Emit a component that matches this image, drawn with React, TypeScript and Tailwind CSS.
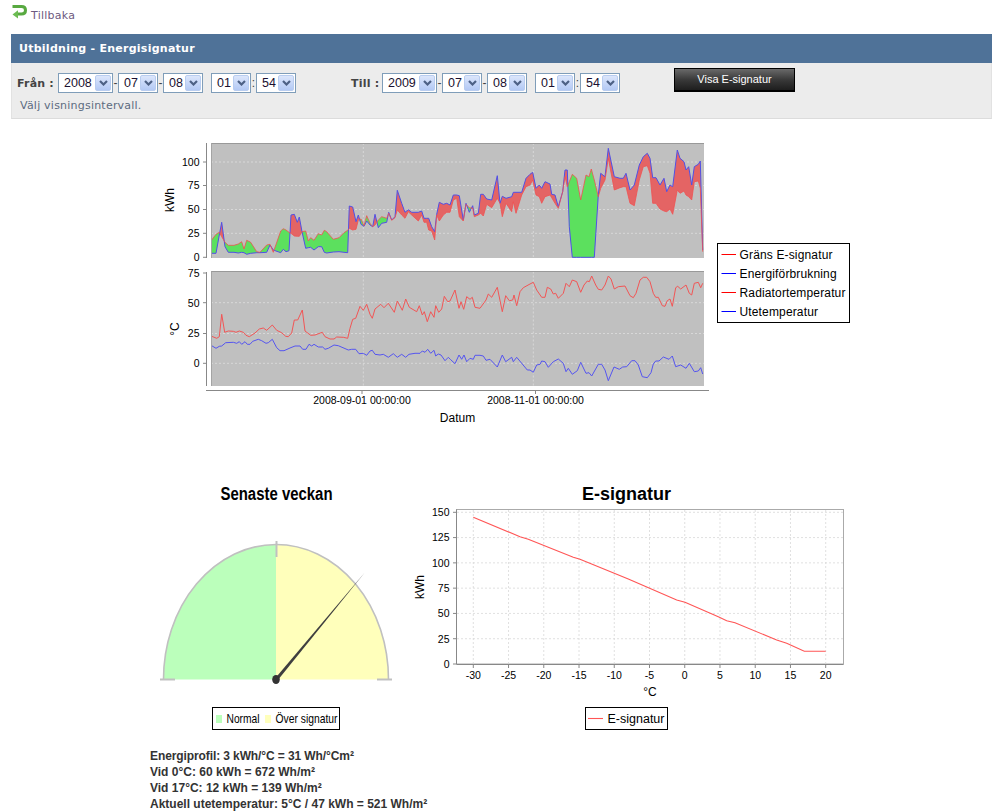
import * as React from 'react';

type Row = [number, number, number];
type Pt = [number, number];

// coordinates read off the reference, scaled 3x: x, blue y, red y
const kwhLeft: Row[] = [
  [155, 355, 315], [168, 355, 298], [178, 300, 292], [185, 262, 305], [195, 335, 322], [205, 352, 331], [222, 352, 331],
  [235, 354, 327], [245, 352, 320], [252, 353, 342], [260, 358, 316], [272, 355, 322], [290, 353, 350], [300, 353, 352],
  [320, 352, 330], [330, 330, 328], [340, 345, 352], [362, 353, 288], [370, 343, 281], [378, 350, 285], [387, 347, 292],
  [393, 240, 295], [403, 238, 303], [412, 262, 304], [418, 246, 304], [426, 290, 290], [437, 340, 288], [445, 338, 318],
  [452, 337, 308], [462, 345, 316], [475, 335, 296], [485, 335, 300], [493, 352, 286], [500, 354, 290], [520, 351, 313],
  [537, 350, 308], [552, 352, 293], [563, 353, 286], [568, 213, 280], [578, 216, 285], [588, 260, 283], [595, 240, 255],
  [603, 268, 252], [612, 274, 272], [620, 258, 242], [630, 270, 265], [638, 275, 275], [645, 238, 270], [655, 278, 255],
  [665, 265, 245], [680, 262, 250], [686, 232, 235], [695, 255, 256], [705, 245, 248], [712, 166, 225], [725, 205, 240],
  [735, 232, 250], [745, 224, 230], [755, 232, 240], [775, 232, 258], [785, 228, 240], [792, 250, 262], [800, 250, 262],
  [806, 250, 285], [815, 275, 288], [824, 290, 315], [830, 238, 240], [838, 202, 258], [850, 208, 240], [860, 205, 232],
  [870, 210, 232], [880, 180, 195],
];

const kwhRight: Row[] = [
  [20, 180, 190], [28, 182, 245], [40, 255, 258], [48, 205, 208], [58, 232, 218], [68, 212, 220], [73, 240, 245],
  [85, 235, 240], [92, 178, 235], [100, 178, 243], [110, 192, 208], [125, 195, 218], [142, 122, 190], [150, 205, 205],
  [157, 184, 245], [168, 190, 205], [185, 185, 230], [190, 172, 200], [198, 172, 235], [215, 172, 180], [228, 130, 155],
  [240, 118, 150], [248, 112, 135], [258, 160, 180], [268, 150, 185], [275, 160, 205], [285, 140, 185], [300, 147, 180],
  [305, 178, 188], [315, 180, 205], [325, 215, 220], [338, 170, 170], [345, 105, 125], [352, 105, 155], [358, 275, 140],
  [367, 367, 118], [380, 367, 130], [392, 367, 195], [408, 367, 120], [417, 367, 125], [424, 367, 102], [433, 367, 135],
  [445, 180, 185], [452, 115, 160], [465, 125, 135], [475, 40, 70], [493, 125, 165], [510, 130, 158], [520, 130, 155],
  [528, 115, 155], [540, 165, 205], [553, 150, 212], [568, 90, 135], [580, 65, 95], [592, 55, 92], [600, 70, 115],
  [608, 128, 205], [618, 128, 205], [630, 150, 222], [642, 130, 228], [650, 170, 230], [660, 150, 222], [668, 155, 238],
  [682, 45, 165], [690, 70, 175], [702, 80, 168], [708, 105, 180], [716, 95, 185], [725, 150, 195], [733, 95, 140],
  [745, 88, 138], [751, 78, 160], [758, 345, 350],
];

const kwhRows: Row[] = [
  ...kwhLeft.map(([x, b, r]): Row => [160 + x / 3, 135 + b / 3, 135 + r / 3]),
  ...kwhRight.map(([x, b, r]): Row => [450 + x / 3, 135 + b / 3, 135 + r / 3]),
];

const radLeft: Pt[] = [
  [155, 214], [170, 220], [178, 215], [185, 148], [194, 202], [205, 198], [220, 199], [228, 202], [238, 198], [250, 202],
  [258, 211], [268, 215], [285, 204], [298, 192], [310, 189], [320, 196], [337, 180], [350, 196], [365, 203], [377, 214],
  [385, 215], [395, 204], [403, 165], [413, 165], [427, 135], [435, 198], [452, 211], [465, 210], [487, 202], [495, 215],
  [510, 222], [522, 222], [530, 216], [550, 217], [563, 220], [570, 190], [578, 163], [587, 160], [600, 124], [610, 136],
  [620, 118], [630, 148], [637, 160], [645, 132], [662, 118], [672, 128], [685, 115], [703, 142], [712, 108], [727, 136],
  [737, 102], [748, 127], [770, 140], [778, 122], [787, 150], [793, 140], [802, 170], [812, 140], [822, 157], [827, 122],
  [836, 142], [845, 132], [853, 94], [863, 110], [870, 108],
];

const radRight: Pt[] = [
  [15, 75], [27, 130], [33, 110], [41, 133], [50, 95], [60, 103], [67, 97], [75, 127], [90, 130], [108, 105], [115, 87],
  [125, 97], [142, 67], [157, 140], [167, 92], [178, 107], [188, 105], [192, 90], [200, 122], [210, 80], [220, 68],
  [240, 57], [250, 52], [260, 75], [275, 97], [285, 97], [292, 67], [302, 72], [310, 87], [317, 85], [325, 100], [340, 85],
  [348, 55], [358, 65], [367, 45], [380, 50], [392, 82], [402, 60], [412, 48], [418, 50], [425, 33], [437, 60], [445, 73],
  [455, 75], [465, 60], [475, 33], [483, 42], [493, 72], [505, 65], [525, 63], [540, 92], [550, 98], [558, 85], [570, 45],
  [580, 37], [590, 37], [600, 50], [610, 85], [617, 97], [625, 97], [637, 122], [645, 124], [652, 107], [660, 102],
  [667, 124], [677, 68], [683, 64], [692, 72], [708, 60], [718, 85], [725, 90], [733, 55], [745, 52], [752, 68], [758, 55],
];

const uteLeft: Pt[] = [
  [155, 242], [168, 250], [178, 244], [185, 243], [197, 233], [220, 232], [230, 235], [238, 230], [245, 238], [255, 230],
  [262, 238], [270, 238], [278, 229], [295, 223], [305, 227], [318, 235], [325, 233], [337, 223], [350, 248], [360, 257],
  [372, 257], [390, 249], [405, 243], [420, 243], [428, 253], [438, 253], [447, 238], [455, 243], [462, 238], [475, 246],
  [488, 246], [495, 253], [505, 250], [522, 240], [535, 242], [565, 255], [575, 253], [587, 253], [597, 266], [610, 265],
  [620, 271], [630, 258], [637, 256], [645, 268], [660, 270], [670, 268], [685, 277], [700, 266], [712, 277], [725, 268],
  [737, 277], [747, 268], [765, 265], [780, 265], [787, 258], [795, 262], [803, 253], [812, 265], [822, 256], [827, 273],
  [835, 267], [843, 270], [855, 287], [865, 277], [872, 284],
];

const uteRight: Pt[] = [
  [15, 296], [27, 270], [35, 283], [42, 270], [50, 290], [60, 280], [70, 283], [75, 271], [90, 271], [100, 273], [108, 286],
  [120, 283], [142, 306], [157, 270], [167, 290], [185, 277], [190, 290], [200, 277], [232, 315], [240, 315], [250, 322],
  [260, 300], [270, 298], [275, 288], [285, 290], [295, 307], [310, 290], [325, 282], [340, 295], [348, 320], [355, 310],
  [367, 328], [382, 317], [392, 292], [408, 325], [417, 323], [425, 333], [445, 298], [455, 298], [465, 315], [475, 347],
  [492, 306], [508, 313], [518, 306], [530, 305], [545, 287], [555, 287], [565, 300], [577, 335], [592, 338], [603, 323],
  [610, 297], [617, 288], [627, 288], [640, 276], [657, 283], [667, 273], [677, 305], [692, 300], [708, 310], [718, 295],
  [733, 320], [745, 318], [752, 308], [758, 327],
];

const esigLine: Pt[] = [
  [190, 112], [330, 170], [355, 178], [490, 232], [510, 238], [620, 283], [655, 297], [800, 360], [825, 367], [925, 410],
  [950, 422], [975, 428], [1100, 480], [1130, 490], [1183, 514], [1247, 514],
];

const toPoints = (pts: Pt[]) => pts.map(([x, y]) => `${x.toFixed(1)},${y.toFixed(1)}`).join(' ');
const tempPts = (left: Pt[], right: Pt[]) => [
  ...left.map(([x, y]): Pt => [160 + x / 3, 265 + y / 3]),
  ...right.map(([x, y]): Pt => [450 + x / 3, 265 + y / 3]),
];

// splits the band between the two series into runs, one polygon per colour
function bandRuns(input: Row[]) {
  // equal values would hide a crossing, so nudge them apart
  const rows = input.map(([x, b, r]): Row => [x, b, b === r ? r + 0.01 : r]);
  const runs: { over: boolean; points: Pt[] }[] = [];
  let top: Pt[] = [];
  let bottom: Pt[] = [];
  let over = rows[0][1] < rows[0][2];
  const flush = () => {
    if (top.length > 1) runs.push({ over, points: [...top, ...bottom.slice().reverse()] });
    top = [];
    bottom = [];
  };
  rows.forEach(([x, b, r], i) => {
    if (i > 0) {
      const [px, pb, pr] = rows[i - 1];
      const d0 = pb - pr;
      const d1 = b - r;
      if (d0 * d1 < 0) {
        const t = d0 / (d0 - d1);
        const cx = px + (x - px) * t;
        const cy = pb + (b - pb) * t;
        top.push([cx, cy]);
        bottom.push([cx, cy]);
        flush();
        over = d1 < 0;
        top.push([cx, cy]);
        bottom.push([cx, cy]);
      }
    }
    top.push([x, b]);
    bottom.push([x, r]);
  });
  flush();
  return runs;
}

const FONT = { fontFamily: '"Liberation Sans", Arial, sans-serif' };

const Select = ({ value, w }: { value: string; w: string }) => (
  <div className={`flex h-[20px] items-stretch border border-[#7f9db9] bg-white p-px ${w}`}>
    <span className="flex-1 pl-[4px] font-['Liberation_Sans'] text-[12.5px] leading-[17px] text-[#1a1030]">{value}</span>
    <span className="flex w-[16px] items-center justify-center rounded-[2px] border border-[#b9cdf0] bg-gradient-to-b from-[#dce6fb] to-[#b3c9f5]">
      <svg width="9" height="6" viewBox="0 0 9 6">
        <path d="M1 1 L4.5 4.5 L8 1" fill="none" stroke="#4d6185" strokeWidth="2.2" />
      </svg>
    </span>
  </div>
);

const Sep = ({ c }: { c: string }) => (
  <span className="w-[5px] text-center font-['Liberation_Sans'] text-[12px] leading-[22px] text-[#444]">{c}</span>
);

const DateRange = ({ label, year, labelW }: { label: string; year: string; labelW: string }) => (
  <div className="flex items-center">
    <span className={`pt-[3px] font-['DejaVu_Sans'] text-[11px] font-bold tracking-[0.2px] text-[#444] ${labelW}`}>{label}</span>
    <Select value={year} w="w-[55px]" />
    <Sep c="-" />
    <Select value="07" w="w-[40px]" />
    <Sep c="-" />
    <Select value="08" w="w-[40px]" />
    <div className="w-[8px]" />
    <Select value="01" w="w-[40px]" />
    <Sep c=":" />
    <Select value="54" w="w-[40px]" />
  </div>
);

const BackIcon = () => (
  <svg width="15" height="15" viewBox="0 0 15 15">
    <path d="M0.5 2.5 H9.5 Q13.5 2.5 13.5 6.2 Q13.5 10 9.5 10 H5" fill="none" stroke="#58a940" strokeWidth="3" />
    <path d="M6 6.2 L0.5 10.4 L6 14.4 Z" fill="#6cbc52" />
  </svg>
);

const GRID = { stroke: '#dedede', strokeWidth: 0.8, strokeDasharray: '2 2' };

const TopCharts = () => {
  const runs = bandRuns(kwhRows);
  const blue = kwhRows.map(([x, b]): Pt => [x, b]);
  const red = kwhRows.map(([x, , r]): Pt => [x, r]);
  const legend: [string, string, number][] = [
    ['Gräns E-signatur', '#ff0000', 254.5],
    ['Energiförbrukning', '#0000ff', 273.5],
    ['Radiatortemperatur', '#ff0000', 292.5],
    ['Utetemperatur', '#0000ff', 311.5],
  ];
  const ticks: [string, number][] = [
    ['100', 162],
    ['75', 185.5],
    ['50', 209.5],
    ['25', 233.3],
    ['0', 257.3],
    ['75', 273],
    ['50', 302.7],
    ['25', 333.5],
    ['0', 363.3],
  ];
  return (
    <svg width="700" height="295" viewBox="160 135 700 295" style={FONT}>
      <defs>
        <clipPath id="kwh-plot">
          <rect x="211" y="143" width="493" height="115" />
        </clipPath>
      </defs>
      <rect x="211" y="143" width="493" height="115" fill="#c0c0c0" />
      <rect x="211" y="271.5" width="493" height="114.5" fill="#c0c0c0" />
      {[162, 185.5, 209.5, 233.3, 302.7, 333.5, 363.3].map((y) => (
        <line key={y} x1="211" x2="704" y1={y} y2={y} {...GRID} />
      ))}
      {[363.3, 533.3].map((x) => (
        <React.Fragment key={x}>
          <line x1={x} x2={x} y1="143" y2="258" {...GRID} />
          <line x1={x} x2={x} y1="271.5" y2="386" {...GRID} />
        </React.Fragment>
      ))}
      <g clipPath="url(#kwh-plot)">
        {runs.map((run, i) => (
          <polygon key={i} points={toPoints(run.points)} fill={run.over ? '#e46464' : '#5ce05e'} />
        ))}
        <polyline points={toPoints(blue)} fill="none" stroke="#5050e6" strokeWidth="1" />
        <polyline points={toPoints(red)} fill="none" stroke="#f05050" strokeWidth="0.8" />
      </g>
      <polyline points={toPoints(tempPts(radLeft, radRight))} fill="none" stroke="#f25555" strokeWidth="1" />
      <polyline points={toPoints(tempPts(uteLeft, uteRight))} fill="none" stroke="#5555f0" strokeWidth="1" />

      <line x1="211" x2="704" y1="143.5" y2="143.5" stroke="#999" />
      <line x1="211" x2="704" y1="271.5" y2="271.5" stroke="#999" />
      <line x1="211.5" x2="211.5" y1="143" y2="258" stroke="#a4a4a4" />
      <line x1="211.5" x2="211.5" y1="271.5" y2="386" stroke="#a4a4a4" />
      <line x1="206.5" x2="206.5" y1="143" y2="258" stroke="#888" />
      <line x1="206.5" x2="206.5" y1="272" y2="386" stroke="#888" />
      <line x1="206" x2="709" y1="390.5" y2="390.5" stroke="#888" />
      {[362, 535.5].map((x) => (
        <line key={x} x1={x} x2={x} y1="390.5" y2="394" stroke="#888" />
      ))}

      {ticks.map(([t, y], i) => (
        <React.Fragment key={i}>
          <line x1="203" x2="206.5" y1={y} y2={y} stroke="#888" />
          <text x="199.5" y={y + 3.8} textAnchor="end" fontSize="10.5" fill="#000">
            {t}
          </text>
        </React.Fragment>
      ))}
      <text x="362" y="404" textAnchor="middle" fontSize="10.5" fill="#000">
        2008-09-01 00:00:00
      </text>
      <text x="535.5" y="404" textAnchor="middle" fontSize="10.5" fill="#000">
        2008-11-01 00:00:00
      </text>
      <text x="457.5" y="422" textAnchor="middle" fontSize="12" fill="#000">
        Datum
      </text>
      <text transform="translate(174 200) rotate(-90)" textAnchor="middle" fontSize="12" fill="#000">
        kWh
      </text>
      <text transform="translate(179 329) rotate(-90)" textAnchor="middle" fontSize="12" fill="#000">
        °C
      </text>

      <rect x="717.5" y="243.5" width="132" height="79" fill="#fff" stroke="#000" />
      {legend.map(([name, color, y]) => (
        <React.Fragment key={name}>
          <line x1="721.5" x2="736" y1={y} y2={y} stroke={color} />
          <text x="739.5" y={y + 4.2} fontSize="12" letterSpacing="0.15" fill="#000">
            {name}
          </text>
        </React.Fragment>
      ))}
    </svg>
  );
};

const Gauge = () => (
  <svg width="270" height="255" viewBox="140 480 270 255" style={FONT}>
    <text x="276.5" y="500" textAnchor="middle" fontSize="18" fontWeight="bold" textLength="112" lengthAdjust="spacingAndGlyphs" fill="#000">
      Senaste veckan
    </text>
    <path d="M276 679.5 H163.5 A112.5 135 0 0 1 276 544.5 Z" fill="#bbffbb" />
    <path d="M276 679.5 H388.5 A112.5 135 0 0 0 276 544.5 Z" fill="#ffffbb" />
    <path d="M163.5 679.5 A112.5 135 0 0 1 388.5 679.5" fill="none" stroke="#c0c0c0" strokeWidth="1.6" />
    <line x1="160" x2="175" y1="679.5" y2="679.5" stroke="#c0c0c0" strokeWidth="2" />
    <line x1="377" x2="392" y1="679.5" y2="679.5" stroke="#c0c0c0" strokeWidth="2" />
    <line x1="276.5" x2="276.5" y1="541" y2="557" stroke="#c0c0c0" strokeWidth="2" />
    <polygon points="275,678.5 277.5,680.5 365,572.3" fill="#3f3f3f" />
    <ellipse cx="276" cy="679.5" rx="3.8" ry="4.6" fill="#333" />
    <rect x="212.5" y="707.5" width="127" height="22" fill="#fff" stroke="#000" />
    <rect x="216" y="715" width="6" height="8" fill="#bbffbb" />
    <text x="226.5" y="723" fontSize="13" textLength="33" lengthAdjust="spacingAndGlyphs" fill="#000">
      Normal
    </text>
    <rect x="265" y="715" width="6" height="8" fill="#ffffbb" />
    <text x="275.5" y="723" fontSize="13" textLength="62" lengthAdjust="spacingAndGlyphs" fill="#000">
      Över signatur
    </text>
  </svg>
);

const ESignature = () => {
  const xs = [-30, -25, -20, -15, -10, -5, 0, 5, 10, 15, 20];
  const ys = [150, 125, 100, 75, 50, 25, 0];
  const px = (v: number) => 473.3 + (v + 30) * 7.048;
  const py = (v: number) => 664 - v * 1.0113;
  return (
    <svg width="450" height="255" viewBox="410 480 450 255" style={FONT}>
      <text x="626.5" y="500" textAnchor="middle" fontSize="18" fontWeight="bold" fill="#000">
        E-signatur
      </text>
      <rect x="456.5" y="509.5" width="387" height="154.5" fill="#fff" stroke="#aaa" />
      {xs.map((v) => (
        <line key={v} x1={px(v)} x2={px(v)} y1="510" y2="664" stroke="#d8d8d8" strokeWidth="0.8" strokeDasharray="2 2" />
      ))}
      {ys.slice(0, 6).map((v) => (
        <line key={v} x1="457" x2="843" y1={py(v)} y2={py(v)} stroke="#d8d8d8" strokeWidth="0.8" strokeDasharray="2 2" />
      ))}
      <polyline
        points={toPoints(esigLine.map(([x, y]): Pt => [410 + x / 3, 480 + y / 3]))}
        fill="none"
        stroke="#ff5555"
        strokeWidth="1.1"
      />
      <line x1="456.5" x2="456.5" y1="509.5" y2="664" stroke="#888" />
      <line x1="456.5" x2="843.5" y1="664.5" y2="664.5" stroke="#888" />
      {ys.map((v) => (
        <React.Fragment key={v}>
          <line x1="453" x2="456.5" y1={py(v)} y2={py(v)} stroke="#888" />
          <text x="449.5" y={py(v) + 3.8} textAnchor="end" fontSize="10.5" fill="#000">
            {v}
          </text>
        </React.Fragment>
      ))}
      {xs.map((v) => (
        <React.Fragment key={v}>
          <line x1={px(v)} x2={px(v)} y1="664.5" y2="668" stroke="#888" />
          <text x={px(v)} y="678.5" textAnchor="middle" fontSize="10.5" fill="#000">
            {v}
          </text>
        </React.Fragment>
      ))}
      <text x="650" y="696" textAnchor="middle" fontSize="12" fill="#000">
        °C
      </text>
      <text transform="translate(424 587) rotate(-90)" textAnchor="middle" fontSize="12" fill="#000">
        kWh
      </text>
      <rect x="585.5" y="707.5" width="82" height="22" fill="#fff" stroke="#000" />
      <line x1="588" x2="603" y1="718.5" y2="718.5" stroke="#ff5555" strokeWidth="1.1" />
      <text x="607.5" y="723" fontSize="12.5" fill="#000">
        E-signatur
      </text>
    </svg>
  );
};

export default function App() {
  return (
    <div className="h-[811px] w-[1003px] overflow-hidden bg-white">
      {/* Back link */}
      <div className="flex h-[34px] items-start pl-[12px] pt-[4px]">
        <BackIcon />
        <span className="ml-[4px] mt-[5px] font-['DejaVu_Sans'] text-[11px] leading-[14px] tracking-[0.25px] text-[#6d5a80]">Tillbaka</span>
      </div>

      {/* Interval panel */}
      <div className="mx-[11px] w-[981px]">
        <div className="flex h-[29px] items-center bg-[#4f7298] pl-[8px] pt-[2px] font-['DejaVu_Sans'] text-[11px] font-bold tracking-[0.26px] text-white">
          Utbildning - Energisignatur
        </div>
        <div className="h-[56px] border-x border-b border-x-[#e2e2e2] border-b-[#dcdcdc] bg-[#ececec] pl-[5px]">
          <div className="flex items-start pt-[9px]">
            <DateRange label="Från :" year="2008" labelW="w-[41px]" />
            <div className="w-[55px]" />
            <DateRange label="Till :" year="2009" labelW="w-[31px]" />
            <button
              type="button"
              className="ml-[54px] -mt-[4px] h-[24px] w-[121px] border border-b-2 border-black bg-gradient-to-b from-[#6a6a6a] via-[#3a3a3a] to-[#1e1e1e] font-['Liberation_Sans'] text-[11px] text-white"
            >
              Visa E-signatur
            </button>
          </div>
          <p className="ml-[3px] mt-[5px] font-['DejaVu_Sans'] text-[11px] leading-[14px] tracking-[0.22px] text-[#5c6b80]">Välj visningsintervall.</p>
        </div>
      </div>

      {/* Time series */}
      <div className="ml-[160px] mt-[16px] flex">
        <TopCharts />
      </div>

      {/* Gauge and signature */}
      <div className="ml-[140px] mt-[50px] flex">
        <Gauge />
        <ESignature />
      </div>

      <div className="ml-[150px] mt-[13px] font-['Liberation_Sans'] text-[12px] font-bold leading-[16px] text-[#333]">
        <p className="tracking-[-0.1px]">Energiprofil: 3 kWh/°C = 31 Wh/°Cm²</p>
        <p>Vid 0°C: 60 kWh = 672 Wh/m²</p>
        <p>Vid 17°C: 12 kWh = 139 Wh/m²</p>
        <p>Aktuell utetemperatur: 5°C / 47 kWh = 521 Wh/m²</p>
      </div>
    </div>
  );
}
